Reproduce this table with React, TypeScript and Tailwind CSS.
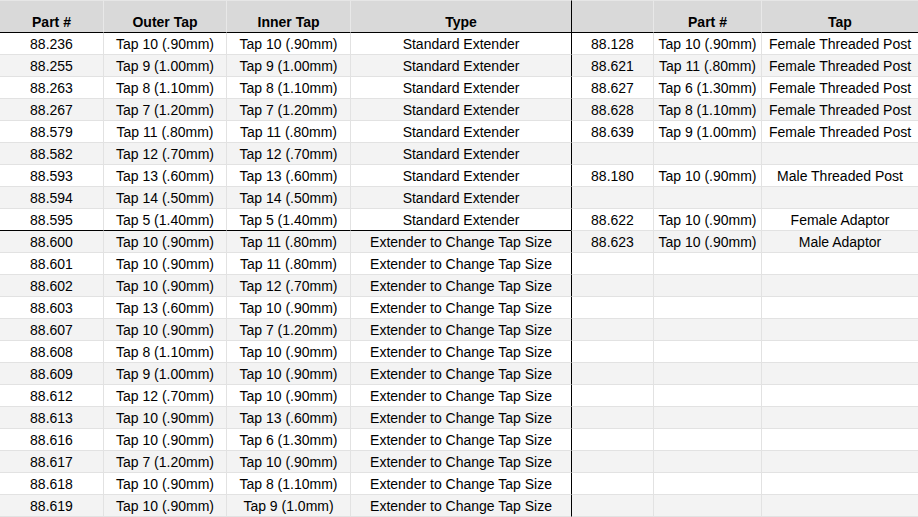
import React from "react";

const left: [string, string, string, string][] = [
  ["88.236", "Tap 10 (.90mm)", "Tap 10 (.90mm)", "Standard Extender"],
  ["88.255", "Tap 9 (1.00mm)", "Tap 9 (1.00mm)", "Standard Extender"],
  ["88.263", "Tap 8 (1.10mm)", "Tap 8 (1.10mm)", "Standard Extender"],
  ["88.267", "Tap 7 (1.20mm)", "Tap 7 (1.20mm)", "Standard Extender"],
  ["88.579", "Tap 11 (.80mm)", "Tap 11 (.80mm)", "Standard Extender"],
  ["88.582", "Tap 12 (.70mm)", "Tap 12 (.70mm)", "Standard Extender"],
  ["88.593", "Tap 13 (.60mm)", "Tap 13 (.60mm)", "Standard Extender"],
  ["88.594", "Tap 14 (.50mm)", "Tap 14 (.50mm)", "Standard Extender"],
  ["88.595", "Tap 5 (1.40mm)", "Tap 5 (1.40mm)", "Standard Extender"],
  ["88.600", "Tap 10 (.90mm)", "Tap 11 (.80mm)", "Extender to Change Tap Size"],
  ["88.601", "Tap 10 (.90mm)", "Tap 11 (.80mm)", "Extender to Change Tap Size"],
  ["88.602", "Tap 10 (.90mm)", "Tap 12 (.70mm)", "Extender to Change Tap Size"],
  ["88.603", "Tap 13 (.60mm)", "Tap 10 (.90mm)", "Extender to Change Tap Size"],
  ["88.607", "Tap 10 (.90mm)", "Tap 7 (1.20mm)", "Extender to Change Tap Size"],
  ["88.608", "Tap 8 (1.10mm)", "Tap 10 (.90mm)", "Extender to Change Tap Size"],
  ["88.609", "Tap 9 (1.00mm)", "Tap 10 (.90mm)", "Extender to Change Tap Size"],
  ["88.612", "Tap 12 (.70mm)", "Tap 10 (.90mm)", "Extender to Change Tap Size"],
  ["88.613", "Tap 10 (.90mm)", "Tap 13 (.60mm)", "Extender to Change Tap Size"],
  ["88.616", "Tap 10 (.90mm)", "Tap 6 (1.30mm)", "Extender to Change Tap Size"],
  ["88.617", "Tap 7 (1.20mm)", "Tap 10 (.90mm)", "Extender to Change Tap Size"],
  ["88.618", "Tap 10 (.90mm)", "Tap 8 (1.10mm)", "Extender to Change Tap Size"],
  ["88.619", "Tap 10 (.90mm)", "Tap 9 (1.0mm)", "Extender to Change Tap Size"],
];

const right: [string, string, string][] = [
  ["88.128", "Tap 10 (.90mm)", "Female Threaded Post"],
  ["88.621", "Tap 11 (.80mm)", "Female Threaded Post"],
  ["88.627", "Tap 6 (1.30mm)", "Female Threaded Post"],
  ["88.628", "Tap 8 (1.10mm)", "Female Threaded Post"],
  ["88.639", "Tap 9 (1.00mm)", "Female Threaded Post"],
  ["", "", ""],
  ["88.180", "Tap 10 (.90mm)", "Male Threaded Post"],
  ["", "", ""],
  ["88.622", "Tap 10 (.90mm)", "Female Adaptor"],
  ["88.623", "Tap 10 (.90mm)", "Male Adaptor"],
];

const headers = ["Part #", "Outer Tap", "Inner Tap", "Type", "", "Part #", "Tap"];

export default function App() {
  return (
    <div
      className="w-[918px] h-[517px] overflow-hidden bg-white text-black text-[14px] leading-none"
      style={{ fontFamily: '"Liberation Sans", Arial, sans-serif' }}
    >
      <div className="grid grid-cols-[103px_123px_124px_221px_82px_108px_157px]">
        {headers.map((h, i) => (
          <div
            key={"h" + i}
            className={`h-[33px] bg-[#d9d9d9] border-b border-b-black border-t border-t-[#e6e6e6] flex items-end justify-center pb-[3px] font-bold ${
              i === 0 ? "" : i === 4 ? "border-l border-l-black" : "border-l border-l-[#e8e8e8]"
            }`}
          >
            {h}
          </div>
        ))}
        {left.map((row, r) => {
          const rr = right[r] ?? ["", "", ""];
          const bg = r % 2 === 0 ? "bg-white" : "bg-[#f3f3f3]";
          const leftBottom = r === 8 ? "border-b-black" : "border-b-[#e2e2e2]";
          const cells = [...row, ...rr];
          return cells.map((c, i) => (
            <div
              key={r + "-" + i}
              className={`h-[22px] ${bg} border-b ${
                i < 4 ? leftBottom : "border-b-[#e2e2e2]"
              } flex items-center justify-center whitespace-nowrap ${
                i === 0 ? "" : i === 4 ? "border-l border-l-black" : "border-l border-l-[#e2e2e2]"
              }`}
            >
              {c}
            </div>
          ));
        })}
      </div>
    </div>
  );
}
